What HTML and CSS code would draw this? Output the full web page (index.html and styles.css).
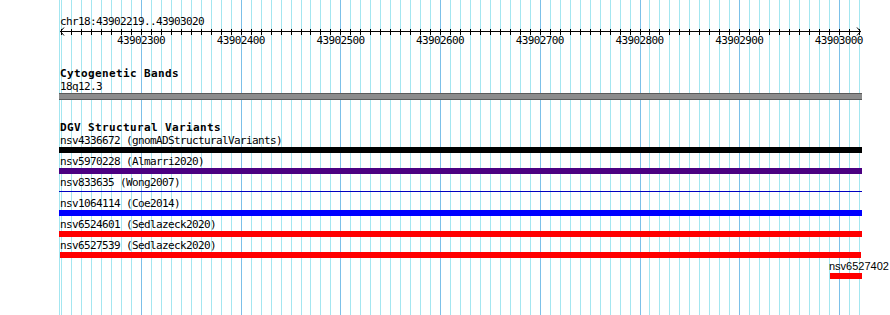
FILE: index.html
```html
<!DOCTYPE html>
<html>
<head>
<meta charset="utf-8">
<link rel="stylesheet" href="styles.css">
</head>
<body>
<div class="panel">
  <svg class="grid" width="890" height="315" viewBox="0 0 890 315" shape-rendering="crispEdges">
    <path class="minor" d="M59.5 0V315M61.5 0V315M71.5 0V315M81.5 0V315M91.5 0V315M101.5 0V315M111.5 0V315M121.5 0V315M131.5 0V315M151.5 0V315M161.5 0V315M171.5 0V315M181.5 0V315M191.5 0V315M201.5 0V315M211.5 0V315M221.5 0V315M231.5 0V315M251.5 0V315M261.5 0V315M271.5 0V315M281.5 0V315M291.5 0V315M301.5 0V315M310.5 0V315M320.5 0V315M330.5 0V315M350.5 0V315M360.5 0V315M370.5 0V315M380.5 0V315M390.5 0V315M400.5 0V315M410.5 0V315M420.5 0V315M430.5 0V315M450.5 0V315M460.5 0V315M470.5 0V315M480.5 0V315M490.5 0V315M500.5 0V315M510.5 0V315M520.5 0V315M530.5 0V315M550.5 0V315M560.5 0V315M570.5 0V315M580.5 0V315M590.5 0V315M600.5 0V315M610.5 0V315M620.5 0V315M630.5 0V315M649.5 0V315M659.5 0V315M669.5 0V315M679.5 0V315M689.5 0V315M699.5 0V315M709.5 0V315M719.5 0V315M729.5 0V315M749.5 0V315M759.5 0V315M769.5 0V315M779.5 0V315M789.5 0V315M799.5 0V315M809.5 0V315M819.5 0V315M829.5 0V315M849.5 0V315M859.5 0V315"/>
    <path class="major" d="M141.5 0V315M241.5 0V315M340.5 0V315M440.5 0V315M540.5 0V315M640.5 0V315M739.5 0V315M839.5 0V315"/>
    <path class="axis" d="M60 31.5H861"/>
    <path class="ticks" d="M61.5 29V35M71.5 29V35M81.5 29V35M91.5 29V35M101.5 29V35M111.5 29V35M121.5 29V35M131.5 29V35M141.5 29V35M151.5 29V35M161.5 29V35M171.5 29V35M181.5 29V35M191.5 29V35M201.5 29V35M211.5 29V35M221.5 29V35M231.5 29V35M241.5 29V35M251.5 29V35M261.5 29V35M271.5 29V35M281.5 29V35M291.5 29V35M301.5 29V35M310.5 29V35M320.5 29V35M330.5 29V35M340.5 29V35M350.5 29V35M360.5 29V35M370.5 29V35M380.5 29V35M390.5 29V35M400.5 29V35M410.5 29V35M420.5 29V35M430.5 29V35M440.5 29V35M450.5 29V35M460.5 29V35M470.5 29V35M480.5 29V35M490.5 29V35M500.5 29V35M510.5 29V35M520.5 29V35M530.5 29V35M540.5 29V35M550.5 29V35M560.5 29V35M570.5 29V35M580.5 29V35M590.5 29V35M600.5 29V35M610.5 29V35M620.5 29V35M630.5 29V35M640.5 29V35M649.5 29V35M659.5 29V35M669.5 29V35M679.5 29V35M689.5 29V35M699.5 29V35M709.5 29V35M719.5 29V35M729.5 29V35M739.5 29V35M749.5 29V35M759.5 29V35M769.5 29V35M779.5 29V35M789.5 29V35M799.5 29V35M809.5 29V35M819.5 29V35M829.5 29V35M839.5 29V35M849.5 29V35M859.5 29V35"/>
    <polyline class="arrow" shape-rendering="auto" points="64,27.5 60.5,31.5 64,35.5"/>
    <polyline class="arrow" shape-rendering="auto" points="857,27.5 860.5,31.5 857,35.5"/>
  </svg>
  <div class="content">
    <div class="locus">chr18:43902219..43903020</div>
    <div class="scale">
      <span class="tick-label">43902300</span>
      <span class="tick-label">43902400</span>
      <span class="tick-label">43902500</span>
      <span class="tick-label">43902600</span>
      <span class="tick-label">43902700</span>
      <span class="tick-label">43902800</span>
      <span class="tick-label">43902900</span>
      <span class="tick-label">43903000</span>
    </div>
    <section class="track track-cyto">
      <div class="track-title">Cytogenetic Bands</div>
      <div class="feat-label">18q12.3</div>
      <div class="band"></div>
    </section>
    <section class="track track-dgv">
      <div class="track-title">DGV Structural Variants</div>
      <div class="feature">
        <div class="feat-label">nsv4336672 (gnomADStructuralVariants)</div>
        <div class="bar bar-black"></div>
      </div>
      <div class="feature">
        <div class="feat-label">nsv5970228 (Almarri2020)</div>
        <div class="bar bar-purple"></div>
      </div>
      <div class="feature">
        <div class="feat-label">nsv833635 (Wong2007)</div>
        <div class="bar-slot"><div class="bar-thin"></div></div>
      </div>
      <div class="feature">
        <div class="feat-label">nsv1064114 (Coe2014)</div>
        <div class="bar bar-blue"></div>
      </div>
      <div class="feature">
        <div class="feat-label">nsv6524601 (Sedlazeck2020)</div>
        <div class="bar bar-red"></div>
      </div>
      <div class="feature">
        <div class="feat-label">nsv6527539 (Sedlazeck2020)</div>
        <div class="bar bar-red bar-inset"></div>
      </div>
      <div class="feature feature-short">
        <div class="feat-label sans">nsv6527402</div>
        <div class="bar bar-red bar-short"></div>
      </div>
    </section>
  </div>
</div>
</body>
</html>
```

FILE: styles.css
```css
* {
  margin: 0;
  padding: 0;
  box-sizing: border-box;
}

html, body {
  background: #ffffff;
}

body {
  margin: 0;
}

.panel {
  position: relative;
  width: 890px;
  height: 315px;
  overflow: hidden;
  background: #ffffff;
}

.grid {
  position: absolute;
  left: 0;
  top: 0;
  display: block;
}

.grid .minor {
  stroke: #a4e6f0;
  stroke-width: 1;
  fill: none;
}

.grid .major {
  stroke: #7cc0e8;
  stroke-width: 1;
  fill: none;
}

.grid .axis,
.grid .ticks {
  stroke: #000000;
  stroke-width: 1;
  fill: none;
}

.grid .arrow {
  stroke: #000000;
  stroke-width: 1;
  fill: none;
}

.content {
  position: relative;
  padding: 15px 0 0 60px;
  font-family: "DejaVu Sans Mono", "Liberation Mono", monospace;
  font-size: 11px;
  letter-spacing: -0.62px;
  line-height: 13px;
  color: #000000;
}

.locus {
  height: 13px;
  white-space: nowrap;
}

.scale {
  display: flex;
  margin-top: 6px;
  padding-left: 57px;
  height: 13px;
  white-space: nowrap;
}

.tick-label {
  flex: none;
  width: 99.7px;
}

.track-title {
  font-weight: bold;
  letter-spacing: 0.38px;
  line-height: 12px;
  height: 12px;
  white-space: nowrap;
}

.feat-label {
  height: 13px;
  white-space: nowrap;
}

.track-cyto {
  margin-top: 21px;
}

.band {
  width: 803px;
  height: 7px;
  margin-left: -1px;
  background: #8c8c8c;
  border-top: 1px solid #5a5a5a;
  border-bottom: 1px solid #5a5a5a;
}

.track-dgv {
  margin-top: 22px;
}

.feature {
  margin-bottom: 2px;
}

.bar {
  width: 803px;
  height: 6px;
  margin-left: -1px;
}

.bar-black {
  background: #000000;
}

.bar-purple {
  background: #4b0082;
}

.bar-blue {
  background: #0000ff;
}

.bar-red {
  background: #ff0000;
}

.bar-inset {
  width: 801px;
  margin-left: 0;
}

.bar-slot {
  width: 803px;
  height: 6px;
  margin-left: -1px;
  padding-top: 2px;
}

.bar-thin {
  height: 1px;
  background: #0000c0;
}

.feature-short {
  margin-left: 770px;
}

.feat-label.sans {
  font-family: "Liberation Sans", Arial, sans-serif;
  letter-spacing: 0;
  margin-left: -1px;
}

.bar-short {
  width: 32px;
  margin-left: 0;
}
```
